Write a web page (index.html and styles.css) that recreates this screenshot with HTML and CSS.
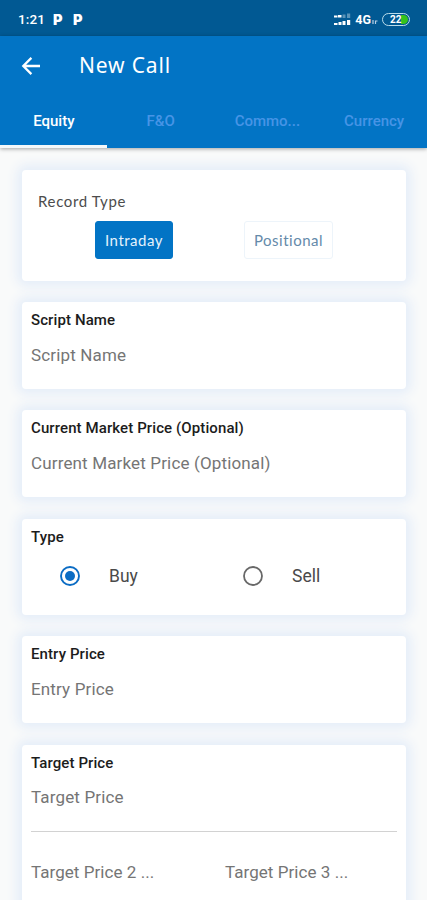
FILE: index.html
```html
<!DOCTYPE html>
<html lang="en">
<head>
    <meta charset="UTF-8">
    <meta name="viewport" content="width=device-width, initial-scale=1.0">
    <title>New Call</title>
    <link rel="stylesheet" href="styles.css">
</head>
<body>
    <div class="status-bar">
        <span class="time">1:21</span>
        <span class="app-icon">P</span>
        <span class="app-icon">P</span>
        <svg class="signal" width="17" height="13" viewBox="0 0 17 13">
            <g fill="#fff">
                <rect x="0" y="2.5" width="3.5" height="2"/>
                <rect x="4" y="2" width="3.5" height="2.5"/>
                <rect x="0" y="10" width="3.5" height="2"/>
                <rect x="4.5" y="9" width="3" height="3"/>
                <rect x="8.5" y="8" width="3" height="4"/>
                <rect x="13" y="7" width="3.2" height="5"/>
            </g>
            <g fill="#fff" opacity="0.35">
                <rect x="8.5" y="1.5" width="3" height="3.5"/>
                <rect x="13" y="0.5" width="3.2" height="4.5"/>
            </g>
        </svg>
        <span class="network">4G</span>
        <svg class="data" width="6" height="6" viewBox="0 0 6 6">
            <path d="M1 1v4M3.5 5V2h2" fill="none" stroke="#b5d0e6" stroke-width="1.2"/>
        </svg>
        <span class="battery"><span class="level"></span><span class="percent">22</span></span>
    </div>

    <header class="header">
        <div class="toolbar">
            <svg class="back" width="20" height="20" viewBox="0 0 20 20">
                <path d="M19 10H2.8M10.4 1.9L2.3 10l8.1 8.1" fill="none" stroke="#fff" stroke-width="2.3"/>
            </svg>
            <h1 class="title">New Call</h1>
        </div>
        <nav class="tabs">
            <a class="tab active">Equity</a>
            <a class="tab">F&amp;O</a>
            <a class="tab">Commo...</a>
            <a class="tab">Currency</a>
        </nav>
    </header>

    <main class="form">
        <section class="card record-card">
            <div class="record-label">Record Type</div>
            <div class="record-options">
                <button class="btn btn-primary">Intraday</button>
                <button class="btn btn-plain">Positional</button>
            </div>
        </section>

        <section class="card">
            <div class="label">Script Name</div>
            <div class="field">Script Name</div>
        </section>

        <section class="card">
            <div class="label">Current Market Price (Optional)</div>
            <div class="field">Current Market Price (Optional)</div>
        </section>

        <section class="card type-card">
            <div class="label">Type</div>
            <div class="radios">
                <div class="radio">
                    <svg width="20" height="20" viewBox="0 0 20 20">
                        <circle cx="10" cy="10" r="9" fill="none" stroke="#0b6cc4" stroke-width="1.9"/>
                        <circle cx="10" cy="10" r="5" fill="#0b6cc4"/>
                    </svg>
                    <span>Buy</span>
                </div>
                <div class="radio">
                    <svg width="20" height="20" viewBox="0 0 20 20">
                        <circle cx="10" cy="10" r="9" fill="none" stroke="#686868" stroke-width="1.8"/>
                    </svg>
                    <span>Sell</span>
                </div>
            </div>
        </section>

        <section class="card">
            <div class="label">Entry Price</div>
            <div class="field">Entry Price</div>
        </section>

        <section class="card target-card">
            <div class="label">Target Price</div>
            <div class="field">Target Price</div>
            <div class="target-row">
                <div class="field">Target Price 2 ...</div>
                <div class="field">Target Price 3 ...</div>
            </div>
        </section>
    </main>
</body>
</html>
```
FILE: styles.css
```css
* {
    box-sizing: border-box;
}
body {
    margin: 0;
    height: 900px;
    overflow: hidden;
    background-color: #f9fafa;
    font-family: Roboto, sans-serif;
}
.status-bar {
    display: flex;
    align-items: center;
    height: 36px;
    padding: 2px 17px 0 18px;
    background-color: #015993;
    color: #fff;
}
.time {
    width: 35px;
    font-size: 13.5px;
    font-weight: 500;
    letter-spacing: 0.1px;
}
.app-icon {
    width: 20px;
    font-family: Inter, sans-serif;
    font-size: 14.5px;
    font-weight: 900;
}
.signal {
    margin-left: auto;
}
.network {
    margin-left: 4px;
    font-size: 12.5px;
    font-weight: 700;
}
.data {
    margin: 6px 4px 0 1px;
}
.battery {
    position: relative;
    width: 28px;
    height: 13px;
    border: 1.5px solid #b9dcea;
    border-radius: 7px;
    overflow: hidden;
}
.level {
    position: absolute;
    top: 1px;
    right: 1px;
    width: 7px;
    height: 9px;
    border-radius: 0 5px 5px 0;
    background-color: #35c21c;
}
.percent {
    position: absolute;
    top: 0;
    left: 7px;
    font-size: 10px;
    line-height: 12px;
    font-weight: 700;
}
.header {
    position: relative;
    height: 112px;
    background-color: #0274c5;
    box-shadow: 0 1px 4px rgba(0, 0, 0, 0.35);
}
.toolbar {
    display: flex;
    align-items: center;
    height: 59px;
    padding-left: 21px;
}
.title {
    margin: -2px 0 0 38px;
    color: #fff;
    font-family: "Noto Sans", sans-serif;
    font-size: 21px;
    font-weight: 400;
    letter-spacing: 0.85px;
}
.tabs {
    display: grid;
    grid-template-columns: repeat(4, 1fr);
    height: 53px;
}
.tab {
    display: flex;
    align-items: center;
    justify-content: center;
    padding: 2px 0 0 1px;
    border-bottom: 3px solid transparent;
    color: #4794e6;
    font-size: 15px;
    font-weight: 500;
}
.tab.active {
    border-bottom-color: #f4f8fa;
    color: #fff;
}
.form {
    display: flex;
    flex-direction: column;
    gap: 21.6px;
    padding: 22px 21px 0 22px;
}
.card {
    flex: none;
    height: 86.8px;
    padding: 8px 9px 0;
    border-radius: 4px;
    background-color: #fff;
    box-shadow: 0 0 12px 5px #e4edf9;
}
.record-card {
    height: 110.5px;
    padding: 21px 16px 0;
}
.record-label {
    color: #4c4c4c;
    font-family: Lato, sans-serif;
    font-size: 15px;
    line-height: 20px;
    letter-spacing: 0.65px;
}
.record-options {
    display: flex;
    justify-content: space-between;
    align-items: center;
    padding: 10px 57px 0;
}
.btn {
    height: 38px;
    padding: 0;
    border-radius: 3px;
    font-family: Lato, sans-serif;
    font-size: 15px;
    letter-spacing: 0.5px;
}
.btn-primary {
    width: 78px;
    border: 1px solid #0274c5;
    background-color: #0274c5;
    color: #e4f2fc;
}
.btn-plain {
    width: 89px;
    border: 1px solid #edf4fa;
    background-color: #fff;
    color: #658aaa;
}
.label {
    color: #1c1c1c;
    font-size: 15px;
    font-weight: 500;
    line-height: 20px;
    letter-spacing: 0.1px;
}
.field {
    margin-top: 14.6px;
    color: #757575;
    font-size: 17px;
    line-height: 20px;
    letter-spacing: 0.15px;
}
.type-card {
    height: 96px;
}
.radios {
    display: grid;
    grid-template-columns: 183px 1fr;
    padding: 19px 0 0 29px;
}
.radio {
    display: flex;
    align-items: center;
    gap: 29px;
    color: #4a4a4a;
    font-size: 17.5px;
    line-height: 20px;
}
.target-card {
    height: 200px;
}
.target-row {
    display: grid;
    grid-template-columns: 194px 1fr;
    margin-top: 24px;
    padding-top: 15px;
    border-top: 1.5px solid #d2d2d2;
}
.target-row .field {
    letter-spacing: 0.05px;
}
```
